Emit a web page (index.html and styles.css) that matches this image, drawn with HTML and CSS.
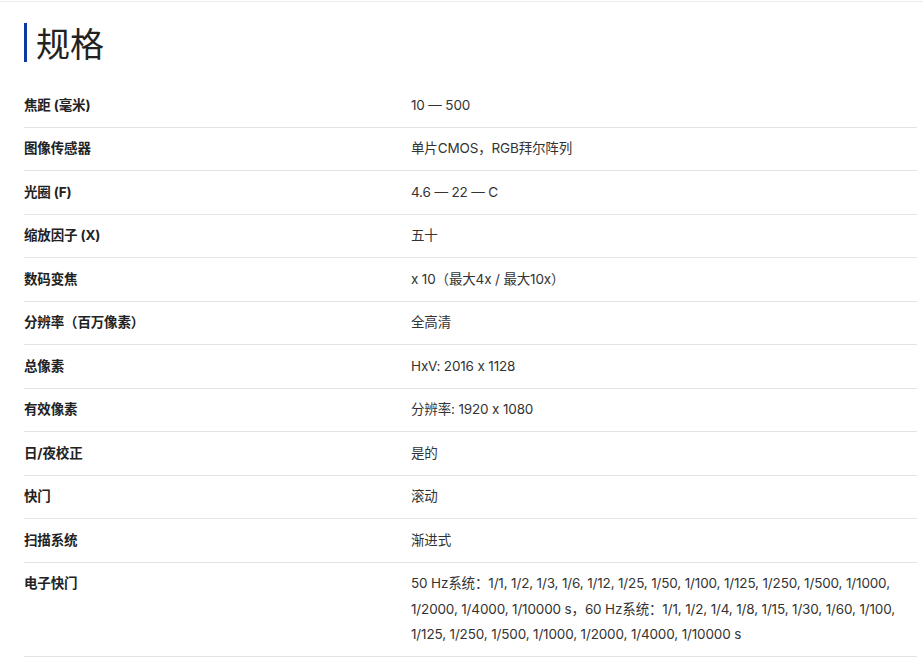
FILE: index.html
```html
<!DOCTYPE html>
<html lang="zh-CN">
<head>
<meta charset="utf-8">
<title>规格</title>
<link rel="stylesheet" href="styles.css">
</head>
<body>
<div class="topline"></div>
<section class="specs">
  <h2 class="title">规格</h2>
  <div class="table">
    <div class="row"><div class="label">焦距 (毫米)</div><div class="value">10 — 500</div></div>
    <div class="row"><div class="label">图像传感器</div><div class="value">单片CMOS，RGB拜尔阵列</div></div>
    <div class="row"><div class="label">光圈 (F)</div><div class="value">4.6 — 22 — C</div></div>
    <div class="row"><div class="label">缩放因子 (X)</div><div class="value">五十</div></div>
    <div class="row"><div class="label">数码变焦</div><div class="value">x 10（最大4x / 最大10x）</div></div>
    <div class="row"><div class="label">分辨率（百万像素）</div><div class="value">全高清</div></div>
    <div class="row"><div class="label">总像素</div><div class="value">HxV: 2016 x 1128</div></div>
    <div class="row"><div class="label">有效像素</div><div class="value">分辨率: 1920 x 1080</div></div>
    <div class="row"><div class="label">日/夜校正</div><div class="value">是的</div></div>
    <div class="row"><div class="label">快门</div><div class="value">滚动</div></div>
    <div class="row"><div class="label">扫描系统</div><div class="value">渐进式</div></div>
    <div class="row"><div class="label">电子快门</div><div class="value">50 Hz系统：1/1, 1/2, 1/3, 1/6, 1/12, 1/25, 1/50, 1/100, 1/125, 1/250, 1/500, 1/1000, 1/2000, 1/4000, 1/10000 s，60 Hz系统：1/1, 1/2, 1/4, 1/8, 1/15, 1/30, 1/60, 1/100, 1/125, 1/250, 1/500, 1/1000, 1/2000, 1/4000, 1/10000 s</div></div>
  </div>
</section>
</body>
</html>
```

FILE: styles.css
```css
html, body {
  margin: 0;
  padding: 0;
  background: #fff;
}
body {
  font-family: Inter, "Noto Sans CJK SC", sans-serif;
  font-feature-settings: "calt" 0, "pnum" 1;
  font-variant-numeric: proportional-nums;
  color: #2b2b2b;
  font-size: 13.5px;
  letter-spacing: -0.15px;
}
.topline {
  height: 1px;
  margin-top: 1px;
  background: #ebebeb;
}
.specs {
  padding: 0 6px 0 24px;
}
.title {
  margin: 21px 0 0 0;
  padding-left: 9px;
  border-left: 3px solid #0b3aa0;
  font-family: "Noto Sans CJK SC", sans-serif;
  font-weight: 400;
  font-size: 34px;
  line-height: 39px;
  letter-spacing: 0;
  color: #222;
}
.table {
  margin-top: 22px;
}
.row {
  display: grid;
  grid-template-columns: 387px 1fr;
  padding: 8.5px 0;
  border-bottom: 1px solid #e3e3e3;
  line-height: 25.5px;
}
.label {
  font-weight: 700;
  color: #222;
}
.value {
  color: #333;
}
```
